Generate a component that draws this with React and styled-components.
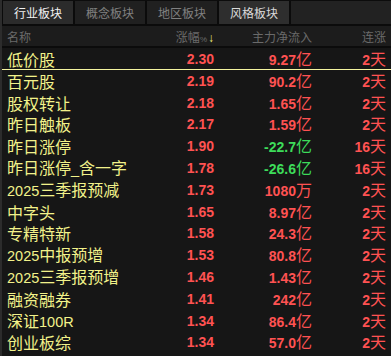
import React from "react";
import styled, { createGlobalStyle } from "styled-components";

const GlobalStyle = createGlobalStyle`
  html, body {
    margin: 0;
    padding: 0;
    background: #161616;
  }
`;

const CJK = `"Noto Sans CJK SC", "Noto Sans", sans-serif`;
const NUM = `"Liberation Sans", Arial, sans-serif`;

const Main = styled.div`
  width: 391px;
  height: 356px;
  box-sizing: border-box;
  background: #161616;
  border-left: 2px solid #2c2c2c;
  overflow: hidden;
  font-family: ${CJK};
`;

const TabBar = styled.div`
  display: flex;
  height: 23px;
  border-top: 1px solid #0c0c0c;
  border-bottom: 2px solid #0b0b0b;
  padding-left: 1px;
  background: #0b0b0b;
`;

const Tab = styled.div`
  width: 70px;
  margin-right: 2px;
  display: flex;
  align-items: center;
  justify-content: center;
  font-size: 12px;
  background: ${(p) => (p.$active ? "#2b2b2b" : p.$hover ? "#2e2e2e" : "#202020")};
  color: ${(p) => (p.$active ? "#f2f2f2" : p.$hover ? "#dadada" : "#808080")};
`;

const TabFill = styled.div`
  flex: 1;
  background: #222222;
`;

const Grid = styled.div`
  display: grid;
  grid-template-columns: 1fr 80px 98px 74px;
  align-items: center;
  padding: 0 5px 0 5px;
`;

const Header = styled(Grid)`
  height: 20px;
  background: #1c1c1c;
  border-bottom: 2px solid #0b0b0b;
  font-size: 12px;
  color: #6a6a6a;
`;

const HeadCell = styled.div`
  text-align: ${(p) => (p.$left ? "left" : "right")};
  white-space: nowrap;
`;

const Pct = styled.span`
  font-family: ${NUM};
  font-size: 8px;
`;

const Arrow = styled.span`
  color: #f0f07a;
  font-family: ${NUM};
  font-size: 12px;
  margin-left: 1px;
`;

const Row = styled(Grid)`
  height: 21.8px;
  box-sizing: border-box;
  border-bottom: ${(p) => (p.$selected ? "1.5px solid #f4f4a0" : "none")};
`;

const Name = styled.div`
  font-size: 16px;
  color: #f2f28a;
  white-space: nowrap;
  line-height: 20px;
`;

const Latin = styled.span`
  font-family: ${NUM};
  font-size: 14.5px;
`;

const Value = styled.div`
  text-align: right;
  white-space: nowrap;
  font-family: ${NUM};
  font-weight: bold;
  font-size: 14px;
  line-height: 20px;
  color: ${(p) => (p.$down ? "#3ddc5a" : "#ff5252")};
`;

const Unit = styled.span`
  font-family: ${CJK};
  font-weight: normal;
  font-size: 16px;
`;

const tabs = ["行业板块", "概念板块", "地区板块", "风格板块"];

const rows = [
  ["低价股", "2.30", "9.27", "亿", "2"],
  ["百元股", "2.19", "90.2", "亿", "2"],
  ["股权转让", "2.18", "1.65", "亿", "2"],
  ["昨日触板", "2.17", "1.59", "亿", "2"],
  ["昨日涨停", "1.90", "-22.7", "亿", "16"],
  ["昨日涨停_含一字", "1.78", "-26.6", "亿", "16"],
  ["2025三季报预减", "1.73", "1080", "万", "2"],
  ["中字头", "1.65", "8.97", "亿", "2"],
  ["专精特新", "1.58", "24.3", "亿", "2"],
  ["2025中报预增", "1.53", "80.8", "亿", "2"],
  ["2025三季报预增", "1.46", "1.43", "亿", "2"],
  ["融资融券", "1.41", "242", "亿", "2"],
  ["深证100R", "1.34", "86.4", "亿", "2"],
  ["创业板综", "1.34", "57.0", "亿", "2"],
];

function renderName(text) {
  // ascii runs get a narrower latin font, like the bitmap font in the terminal
  return text.split(/([\x21-\x7e]+)/).map((part, i) =>
    /^[\x21-\x7e]+$/.test(part) ? <Latin key={i}>{part}</Latin> : part
  );
}

export default function App() {
  return (
    <Main>
      <GlobalStyle />
      <TabBar>
        {tabs.map((t, i) => (
          <Tab key={t} $active={i === 0} $hover={i === 3}>
            {t}
          </Tab>
        ))}
        <TabFill />
      </TabBar>
      <Header>
        <HeadCell $left>名称</HeadCell>
        <HeadCell>
          涨幅<Pct>%</Pct>
          <Arrow>↓</Arrow>
        </HeadCell>
        <HeadCell>主力净流入</HeadCell>
        <HeadCell>连涨</HeadCell>
      </Header>
      {rows.map(([name, pct, flow, unit, days], i) => (
        <Row key={name} $selected={i === 0}>
          <Name>{renderName(name)}</Name>
          <Value>{pct}</Value>
          <Value $down={flow.startsWith("-")}>
            {flow}
            <Unit>{unit}</Unit>
          </Value>
          <Value>
            {days}
            <Unit>天</Unit>
          </Value>
        </Row>
      ))}
    </Main>
  );
}
